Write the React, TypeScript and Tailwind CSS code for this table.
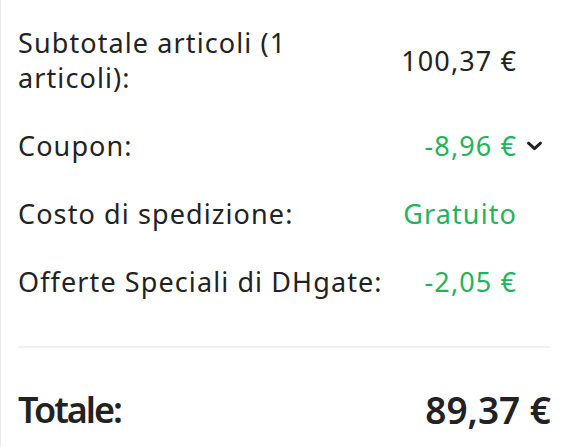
import React from 'react';

const green = "text-[#1fb45c]";

function Row({ label, value, valueClass = "text-[#222]", chevron = false, labelClass = "" }: {
  label: string;
  value: string;
  valueClass?: string;
  chevron?: boolean;
  labelClass?: string;
}) {
  return (
    <div className="flex items-center justify-between">
      <div className={`text-[#222] ${labelClass}`}>{label}</div>
      <div className="flex items-center">
        <span className={valueClass}>{value}</span>
        <span className="w-[34px] flex justify-center">
          {chevron && (
            <svg width="17" height="10" viewBox="0 0 17 10">
              <path d="M2.5 2.2 L8.5 7.6 L14.5 2.2" fill="none" stroke="#222" strokeWidth="3" strokeLinecap="round" strokeLinejoin="round" />
            </svg>
          )}
        </span>
      </div>
    </div>
  );
}

export default function App() {
  return (
    <div className="w-[571px] h-[447px] bg-white border-l border-[#ececec] overflow-hidden" style={{ fontFamily: '"Noto Sans", sans-serif' }}>
      <div className="pl-[17px] pr-[20px] pt-[25px] text-[27px] leading-[35px] tracking-[1.1px]">
        <div className="flex flex-col gap-[33px]">
          <Row label="Subtotale articoli (1 articoli):" labelClass="max-w-[290px]" value="100,37 €" />
          <Row label="Coupon:" value="-8,96 €" valueClass={green} chevron />
          <Row label="Costo di spedizione:" value="Gratuito" valueClass={green} />
          <Row label="Offerte Speciali di DHgate:" value="-2,05 €" valueClass={green} />
        </div>
        <div className="mt-[47px] border-t-2 border-[#f2f2f2]" />
        <div className="flex items-center justify-between mt-[40px] font-semibold text-[#222] leading-[44px] tracking-normal">
          <span className="text-[36px] tracking-[-2px]">Totale:</span>
          <span className="text-[37px]">89,37 €</span>
        </div>
      </div>
    </div>
  );
}
